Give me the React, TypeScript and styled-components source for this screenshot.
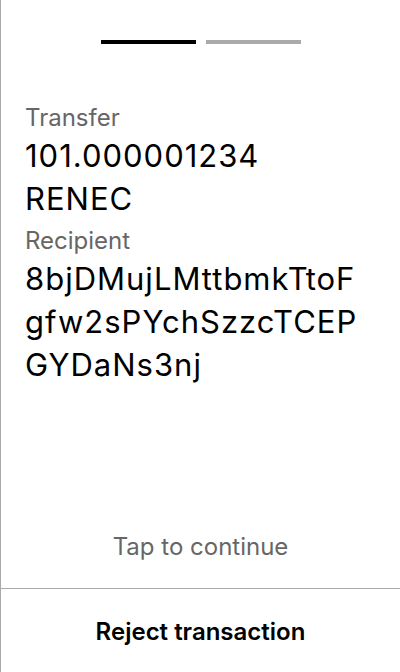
import React from "react";
import styled, { createGlobalStyle } from "styled-components";

const Global = createGlobalStyle`
  html, body { margin: 0; padding: 0; background: #fff; }
  body { font-family: Inter, "Noto Sans", sans-serif; color: #000; }
`;

const Screen = styled.div`
  width: 400px;
  height: 672px;
  box-sizing: border-box;
  border-left: 1px solid #aaa;
  display: flex;
  flex-direction: column;
  overflow: hidden;
`;

const Progress = styled.div`
  display: flex;
  justify-content: center;
  gap: 10px;
  padding-top: 40px;
`;

const Step = styled.div<{ $active?: boolean }>`
  width: 95px;
  height: 4px;
  background: ${(p) => (p.$active ? "#000" : "#aaa")};
`;

const Body = styled.div`
  flex: 1;
  padding: 58px 34px 0 24px;
  display: flex;
  flex-direction: column;
`;

const Label = styled.div`
  font-size: 24px;
  line-height: 32px;
  color: #666;
`;

const Value = styled.div`
  font-size: 31px;
  line-height: 43px;
  letter-spacing: 1px;
  color: #000;
  word-break: break-all;
  margin-bottom: 5px;
`;

const Hint = styled.div`
  text-align: center;
  font-size: 24px;
  line-height: 30px;
  color: #666;
  padding-bottom: 26px;
`;

const Divider = styled.div`
  height: 1px;
  background: #aaa;
`;

const Reject = styled.button`
  all: unset;
  display: block;
  text-align: center;
  font-family: Inter, "Noto Sans", sans-serif;
  font-size: 24px;
  font-weight: 600;
  color: #000;
  height: 83px;
  line-height: 86px;
`;

export default function App() {
  return (
    <>
      <Global />
      <Screen>
        <Progress>
          <Step $active />
          <Step />
        </Progress>
        <Body>
          <Label>Transfer</Label>
          <Value>
            101.000001234
            <br />
            RENEC
          </Value>
          <Label>Recipient</Label>
          <Value>8bjDMujLMttbmkTtoFgfw2sPYchSzzcTCEPGYDaNs3nj</Value>
        </Body>
        <Hint>Tap to continue</Hint>
        <Divider />
        <Reject>Reject transaction</Reject>
      </Screen>
    </>
  );
}
